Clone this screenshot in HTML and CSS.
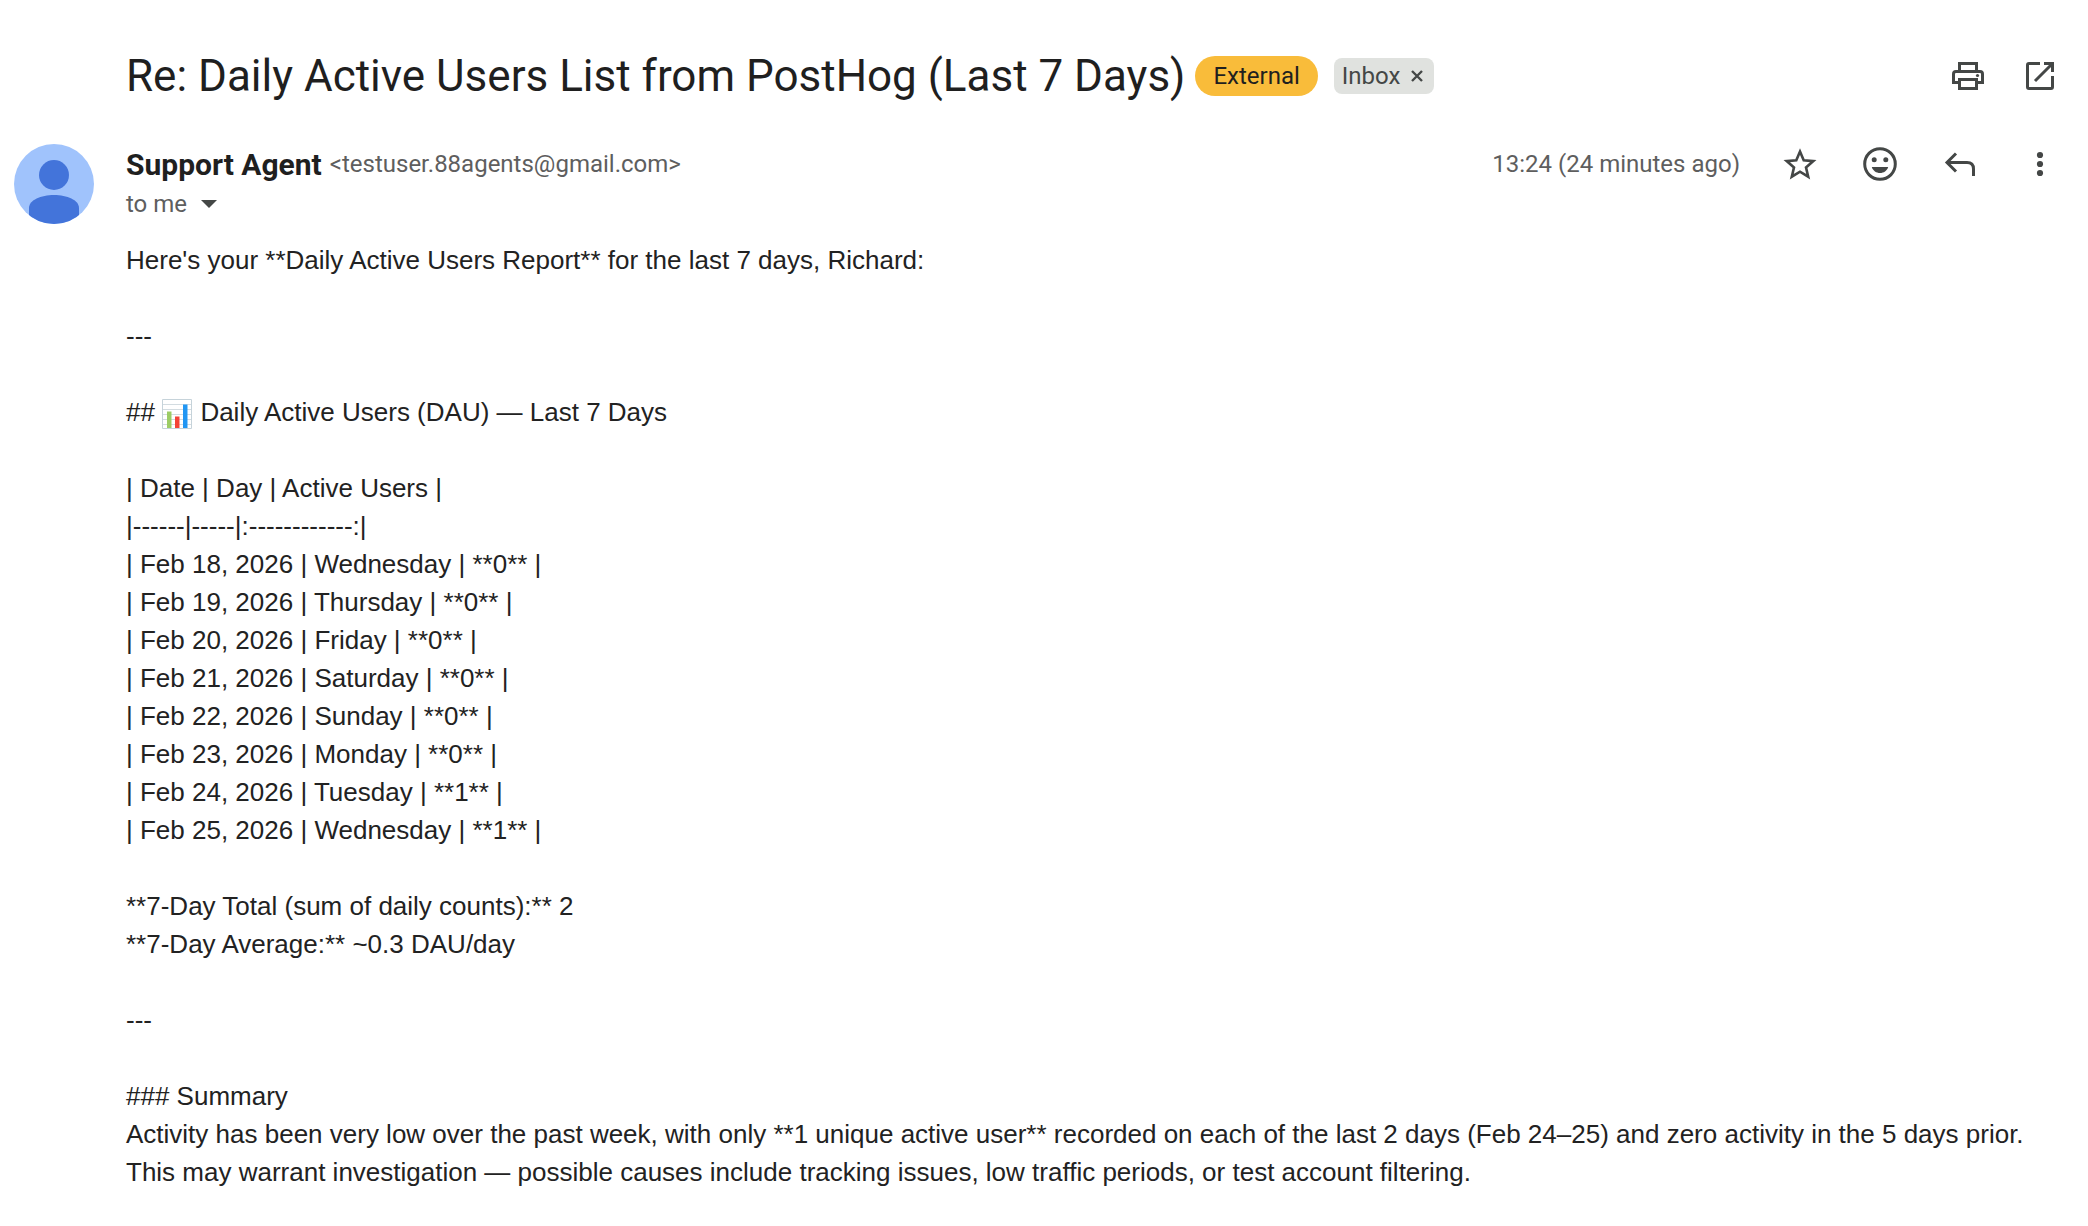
FILE: index.html
```html
<!DOCTYPE html>
<html lang="en">
<head>
  <meta charset="UTF-8" />
  <meta name="viewport" content="width=device-width, initial-scale=1" />
  <title>Re: Daily Active Users List from PostHog (Last 7 Days)</title>
  <link rel="stylesheet" href="styles.css">
</head>
<body>
  <header class="subject-bar">
    <h1>Re: Daily Active Users List from PostHog (Last 7 Days)</h1>
    <span class="external">External</span>
    <span class="label">Inbox
      <button class="remove" aria-label="Remove label Inbox">
        <svg width="14" height="14" viewBox="0 0 14 14"><path d="M2 2l10 10M12 2L2 12" fill="none" stroke="currentColor" stroke-width="2.4"/></svg>
      </button>
    </span>
    <div class="actions">
      <button class="icon" aria-label="Print">
        <svg viewBox="0 0 40 40" fill="none" stroke="currentColor" stroke-width="3">
          <path d="M11.500 14V7.500h17V14"/>
          <path d="M11.500 26.500H5.500V18q0-2.500 2.500-2.500h24q2.500 0 2.500 2.500v8.500h-6"/>
          <path d="M11.500 23.500h17v9h-17z"/>
          <circle cx="29.500" cy="19.500" r="1.600" fill="currentColor" stroke="none"/>
        </svg>
      </button>
      <button class="icon" aria-label="Open in new window">
        <svg viewBox="0 0 40 40" fill="none" stroke="currentColor" stroke-width="3">
          <path d="M20 7.500H9Q7.500 7.500 7.500 9v22q0 1.500 1.500 1.500h22q1.500 0 1.500-1.500V20"/>
          <path d="M24 7.500h8.500V16M32 8L15 25"/>
        </svg>
      </button>
    </div>
  </header>

  <article class="message">
    <svg class="avatar" viewBox="0 0 80 80" role="img" aria-label="Support Agent">
      <defs><clipPath id="round"><circle cx="40" cy="40" r="40"/></clipPath></defs>
      <g clip-path="url(#round)">
        <path d="M0 0h80v80H0z" fill="#a0c3fc"/>
        <circle cx="40" cy="31" r="15" fill="#4374da"/>
        <path d="M15 80V64c0-8 12-13 25-13s25 5 25 13v16z" fill="#4374da"/>
      </g>
    </svg>

    <div class="content">
      <div class="sender-row">
        <div class="sender">
          <strong>Support Agent</strong>
          <span class="email">&lt;testuser.88agents@gmail.com&gt;</span>
        </div>
        <time>13:24 (24 minutes ago)</time>
        <div class="actions">
          <button class="icon" aria-label="Star">
            <svg viewBox="0 0 40 40"><path d="M20 7.500l3.700 8.800 9.600.8-7.300 6.300 2.200 9.300-8.200-5-8.200 5 2.200-9.300-7.300-6.300 9.600-.8z" fill="none" stroke="currentColor" stroke-width="2.600"/></svg>
          </button>
          <button class="icon" aria-label="Add reaction">
            <svg viewBox="0 0 40 40">
              <circle cx="20" cy="20" r="15.300" fill="none" stroke="currentColor" stroke-width="3"/>
              <circle cx="14.200" cy="15.800" r="2.500" fill="currentColor"/>
              <circle cx="25.800" cy="15.800" r="2.500" fill="currentColor"/>
              <path d="M11.800 23h16.400c-1.200 3.900-4.500 6-8.200 6s-7-2.100-8.200-6z" fill="currentColor"/>
            </svg>
          </button>
          <button class="icon" aria-label="Reply">
            <svg viewBox="0 0 40 40"><path d="M16 9.500L7 18.500l9 9M7 18.500h20q6.500 0 6.500 6.500v7" fill="none" stroke="currentColor" stroke-width="3"/></svg>
          </button>
          <button class="icon" aria-label="More">
            <svg viewBox="0 0 40 40" fill="currentColor"><circle cx="20" cy="11" r="3.100"/><circle cx="20" cy="20" r="3.100"/><circle cx="20" cy="29" r="3.100"/></svg>
          </button>
        </div>
      </div>
      <div class="recipient">to me
        <button class="details" aria-label="Show details">
          <svg width="16" height="8" viewBox="0 0 16 8"><path d="M0 0h16L8 8z" fill="currentColor"/></svg>
        </button>
      </div>

      <div class="body">
        <p>Here's your **Daily Active Users Report** for the last 7 days, Richard:</p>
        <p>---</p>
        <p>## <svg class="emoji" viewBox="0 0 30 30" role="img" aria-label="bar chart"><path d="M.5.5h29v29H.5z" fill="#fff" stroke="#c6d3da"/><path d="M1 5.500h28M1 10.500h28M1 15.500h28M1 20.500h28M1 25.500h28" stroke="#d3dce1"/><path d="M5 12.500h4.500V29H5z" fill="#9ccc65"/><path d="M13 17.500h4.500V29H13z" fill="#f44336"/><path d="M21 5.500h4.500V29H21z" fill="#2196f3"/></svg> Daily Active Users (DAU) — Last 7 Days</p>
        <p>| Date | Day | Active Users |<br>
          |------|-----|:------------:|<br>
          | Feb 18, 2026 | Wednesday | **0** |<br>
          | Feb 19, 2026 | Thursday | **0** |<br>
          | Feb 20, 2026 | Friday | **0** |<br>
          | Feb 21, 2026 | Saturday | **0** |<br>
          | Feb 22, 2026 | Sunday | **0** |<br>
          | Feb 23, 2026 | Monday | **0** |<br>
          | Feb 24, 2026 | Tuesday | **1** |<br>
          | Feb 25, 2026 | Wednesday | **1** |</p>
        <p>**7-Day Total (sum of daily counts):** 2<br>
          **7-Day Average:** ~0.3 DAU/day</p>
        <p>---</p>
        <p>### Summary<br>
          Activity has been very low over the past week, with only **1 unique active user** recorded on each of the last 2 days (Feb 24–25) and zero activity in the 5 days prior.<br>
          This may warrant investigation — possible causes include tracking issues, low traffic periods, or test account filtering.</p>
      </div>
    </div>
  </article>
</body>
</html>
```
FILE: styles.css
```css
* {
  box-sizing: border-box;
}
body {
  margin: 0;
  padding: 44px 28px 20px 14px;
  background: #fff;
  color: #1f1f1f;
  font-family: Roboto, "Liberation Sans", sans-serif;
  font-size: 24px;
}
button {
  padding: 0;
  border: none;
  background: none;
  color: #444746;
  cursor: pointer;
}
svg {
  display: block;
}
.subject-bar {
  display: flex;
  align-items: center;
  min-height: 64px;
  padding-left: 112px;
}
h1 {
  margin: 0 10px 0 0;
  font-size: 44px;
  font-weight: 400;
  line-height: 56px;
}
.external {
  padding: 0 18px;
  border-radius: 20px;
  background: #f9bc3a;
  line-height: 40px;
}
.label {
  display: flex;
  align-items: center;
  gap: 10px;
  margin-left: 16px;
  padding: 0 10px 0 8px;
  border-radius: 8px;
  background: #e0e2df;
  color: #444746;
  line-height: 36px;
}
.actions {
  display: flex;
  gap: 40px;
}
.subject-bar .actions {
  gap: 32px;
  margin-left: auto;
}
.icon {
  width: 40px;
  height: 40px;
}
.message {
  display: flex;
  gap: 32px;
  margin-top: 36px;
}
.avatar {
  flex: none;
  width: 80px;
  height: 80px;
}
.content {
  flex: 1;
}
.sender-row {
  display: flex;
  align-items: center;
  height: 40px;
}
.sender {
  display: flex;
  flex: 1;
  align-items: center;
  gap: 8px;
}
.sender strong {
  font-size: 30px;
}
.email, time, .recipient {
  color: #5e5e5e;
}
time {
  margin-right: 40px;
}
.recipient {
  display: flex;
  align-items: center;
  gap: 14px;
  line-height: 40px;
}
.body {
  margin-top: 17px;
  color: #222;
  font-family: "Liberation Sans", Arial, sans-serif;
  font-size: 26px;
  line-height: 38px;
}
.body p {
  margin: 0 0 38px;
}
.body p:last-child {
  margin-bottom: 0;
}
.emoji {
  display: inline-block;
  width: 30px;
  height: 30px;
  margin-right: 1px;
  vertical-align: -8px;
}
```
